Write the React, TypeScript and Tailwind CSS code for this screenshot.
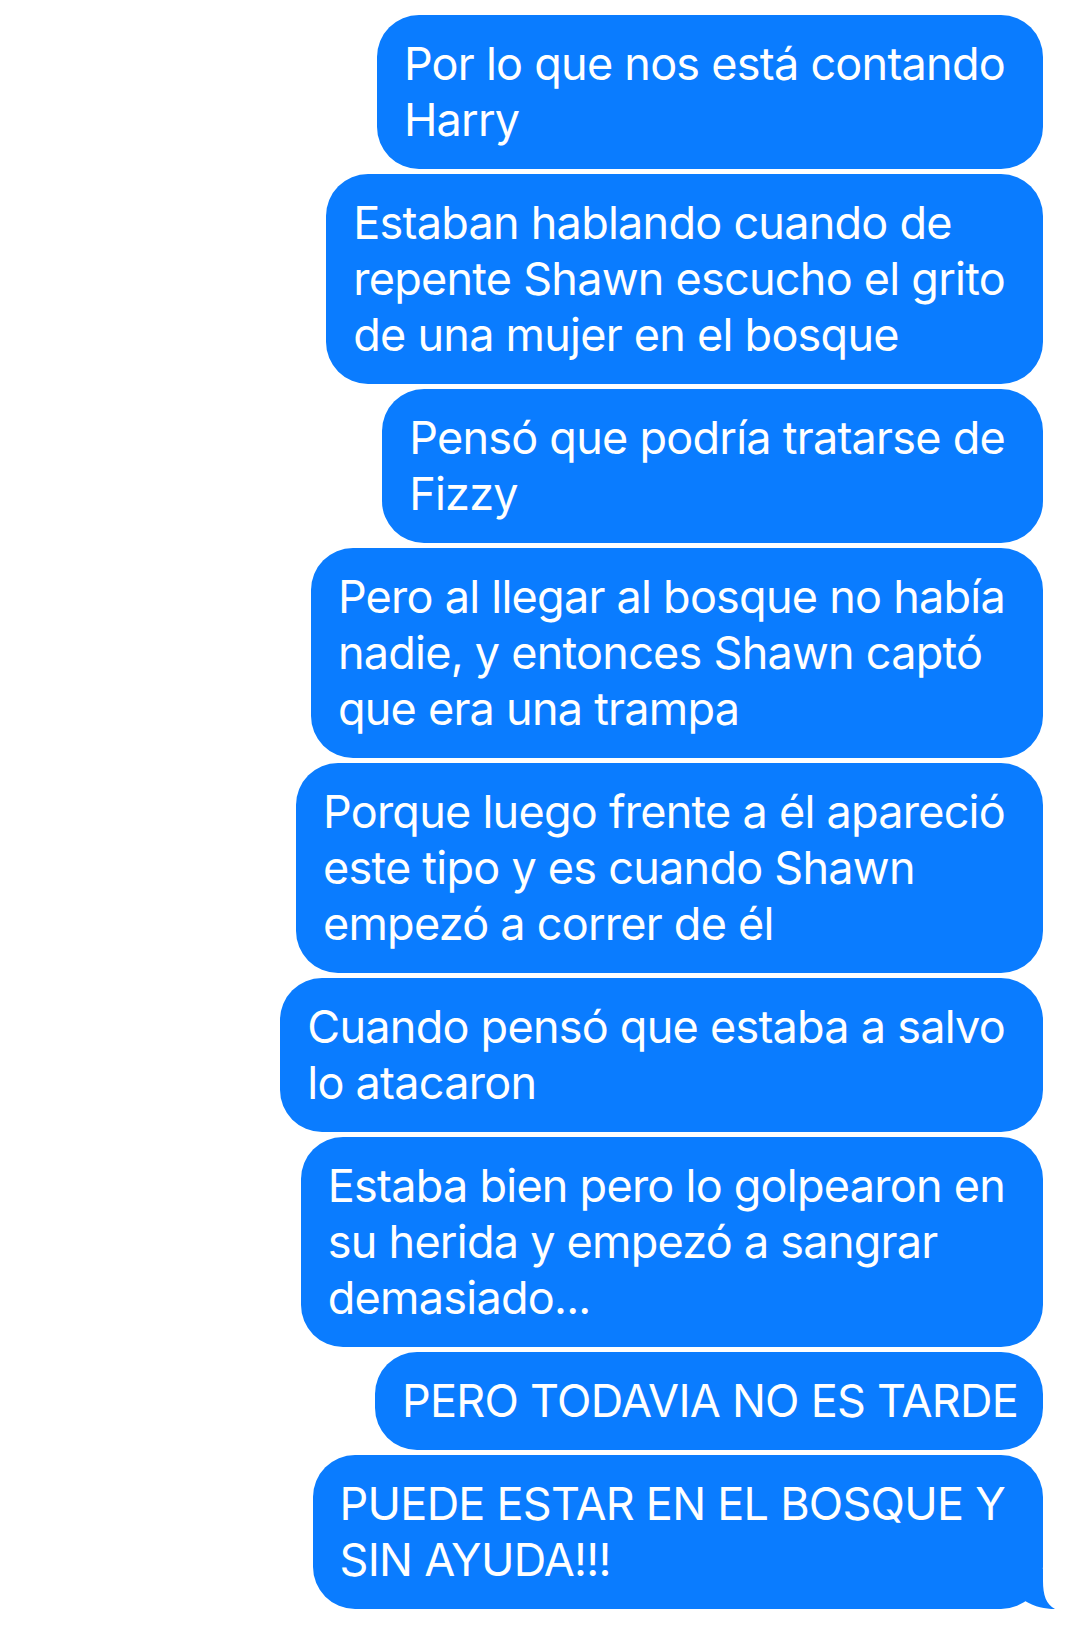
const messages: { lines: string[]; tight?: boolean }[] = [
  { lines: ["Por lo que nos está contando", "Harry"] },
  { lines: ["Estaban hablando cuando de", "repente Shawn escucho el grito", "de una mujer en el bosque"] },
  { lines: ["Pensó que podría tratarse de", "Fizzy"] },
  { lines: ["Pero al llegar al bosque no había", "nadie, y entonces Shawn captó", "que era una trampa"] },
  { lines: ["Porque luego frente a él apareció", "este tipo y es cuando Shawn", "empezó a correr de él"] },
  { lines: ["Cuando pensó que estaba a salvo", "lo atacaron"] },
  { lines: ["Estaba bien pero lo golpearon en", "su herida y empezó a sangrar", "demasiado..."] },
  { lines: ["PERO TODAVIA NO ES TARDE"], tight: true },
  { lines: ["PUEDE ESTAR EN EL BOSQUE Y", "SIN AYUDA!!!"] },
];

function Bubble({ lines, tight, last }: { lines: string[]; tight?: boolean; last?: boolean }) {
  return (
    <div className="relative">
      <div
        className={
          "rounded-[42px] bg-[#0a7cff] py-[21px] pl-[27px] text-[45px] leading-[56px] tracking-[-0.75px] text-white whitespace-nowrap " +
          (tight ? "pr-[25px]" : "pr-[38px]")
        }
      >
        {lines.map((l, i) => (
          <div key={i}>{l}</div>
        ))}
      </div>
      {last && (
        <svg className="absolute right-[-15px] bottom-0" width="45" height="40" viewBox="0 0 45 40">
          <path d="M12 32 L12 0 L30 0 L30 12 C30 26 33 35 42 40 C32 40 22 38 12 32 Z" fill="#0a7cff" />
        </svg>
      )}
    </div>
  );
}

export default function App() {
  return (
    <div className="min-h-[1627px] w-[1080px] bg-white" style={{ fontFamily: '"Inter", "Roboto", sans-serif' }}>
      <div className="flex flex-col items-end gap-[5px] pr-[37px] pt-[15px]">
        {messages.map((m, i) => (
          <Bubble key={i} lines={m.lines} tight={m.tight} last={i === messages.length - 1} />
        ))}
      </div>
    </div>
  );
}
